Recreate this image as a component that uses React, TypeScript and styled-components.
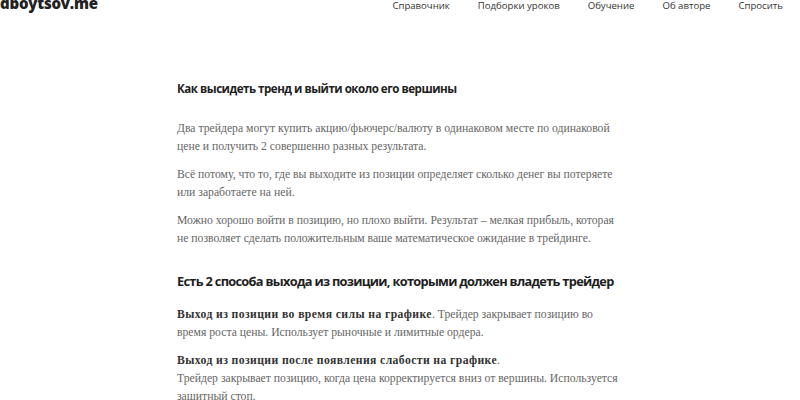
import styled, { createGlobalStyle } from "styled-components";

const GlobalStyle = createGlobalStyle`
  html, body {
    margin: 0;
    padding: 0;
    background: #ffffff;
  }
  body {
    font-family: "Open Sans", "Liberation Sans", sans-serif;
  }
`;

const navItems = ["Справочник", "Подборки уроков", "Обучение", "Об авторе", "Спросить"];

function App() {
  return (
    <>
      <GlobalStyle />
      <Page>
        <Header>
          <Logo>dboytsov.me</Logo>
          <Nav>
            {navItems.map((item) => (
              <NavLink key={item} href="#">
                {item}
              </NavLink>
            ))}
          </Nav>
        </Header>
        <Article>
          <Title>Как высидеть тренд и выйти около его вершины</Title>
          <Paragraph>
            Два трейдера могут купить акцию/фьючерс/валюту в одинаковом месте по одинаковой
            цене и получить 2 совершенно разных результата.
          </Paragraph>
          <Paragraph>
            Всё потому, что то, где вы выходите из позиции определяет сколько денег вы потеряете
            или заработаете на ней.
          </Paragraph>
          <Paragraph>
            Можно хорошо войти в позицию, но плохо выйти. Результат – мелкая прибыль, которая
            не позволяет сделать положительным ваше математическое ожидание в трейдинге.
          </Paragraph>
          <Subtitle>Есть 2 способа выхода из позиции, которыми должен владеть трейдер</Subtitle>
          <Paragraph>
            <Strong>Выход из позиции во время силы на графике</Strong>. Трейдер закрывает позицию во
            время роста цены. Использует рыночные и лимитные ордера.
          </Paragraph>
          <Paragraph>
            <Strong>Выход из позиции после появления слабости на графике</Strong>.
            <br />
            Трейдер закрывает позицию, когда цена корректируется вниз от вершины. Используется
            защитный стоп.
          </Paragraph>
        </Article>
      </Page>
    </>
  );
}

const Page = styled.div`
  width: 800px;
  height: 400px;
  overflow: hidden;
  background: #ffffff;
`;

const Header = styled.header`
  display: flex;
  justify-content: space-between;
  align-items: flex-start;
  height: 40px;
  margin-top: -6px;
`;

const Logo = styled.div`
  font-family: "Open Sans", "Liberation Sans", sans-serif;
  font-size: 15px;
  font-weight: 800;
  color: #222222;
  letter-spacing: -0.2px;
  line-height: 18px;
`;

const Nav = styled.nav`
  display: flex;
  gap: 28px;
  padding-top: 5px;
  padding-right: 17px;
`;

const NavLink = styled.a`
  font-family: "Open Sans", "Liberation Sans", sans-serif;
  font-size: 9.6px;
  color: #333333;
  text-decoration: none;
  line-height: 14px;
`;

const Article = styled.article`
  width: 442px;
  margin: 46px 0 0 177px;
`;

const Title = styled.h1`
  margin: 0 0 22px;
  font-family: "Open Sans", "Liberation Sans", sans-serif;
  font-size: 11.6px;
  font-weight: 700;
  letter-spacing: -0.5px;
  color: #222222;
  line-height: 18px;
`;

const Subtitle = styled.h2`
  margin: 23px 0 15px;
  font-family: "Open Sans", "Liberation Sans", sans-serif;
  font-size: 12.8px;
  font-weight: 700;
  letter-spacing: -0.7px;
  color: #1e1e1e;
  line-height: 20px;
  white-space: nowrap;
`;

const Paragraph = styled.p`
  margin: 0 0 10px;
  font-family: "Liberation Serif", "DejaVu Serif", serif;
  font-size: 11.7px;
  line-height: 18px;
  color: #666666;
`;

const Strong = styled.strong`
  font-weight: 700;
  letter-spacing: 0.4px;
  color: #333333;
`;

export default App;
